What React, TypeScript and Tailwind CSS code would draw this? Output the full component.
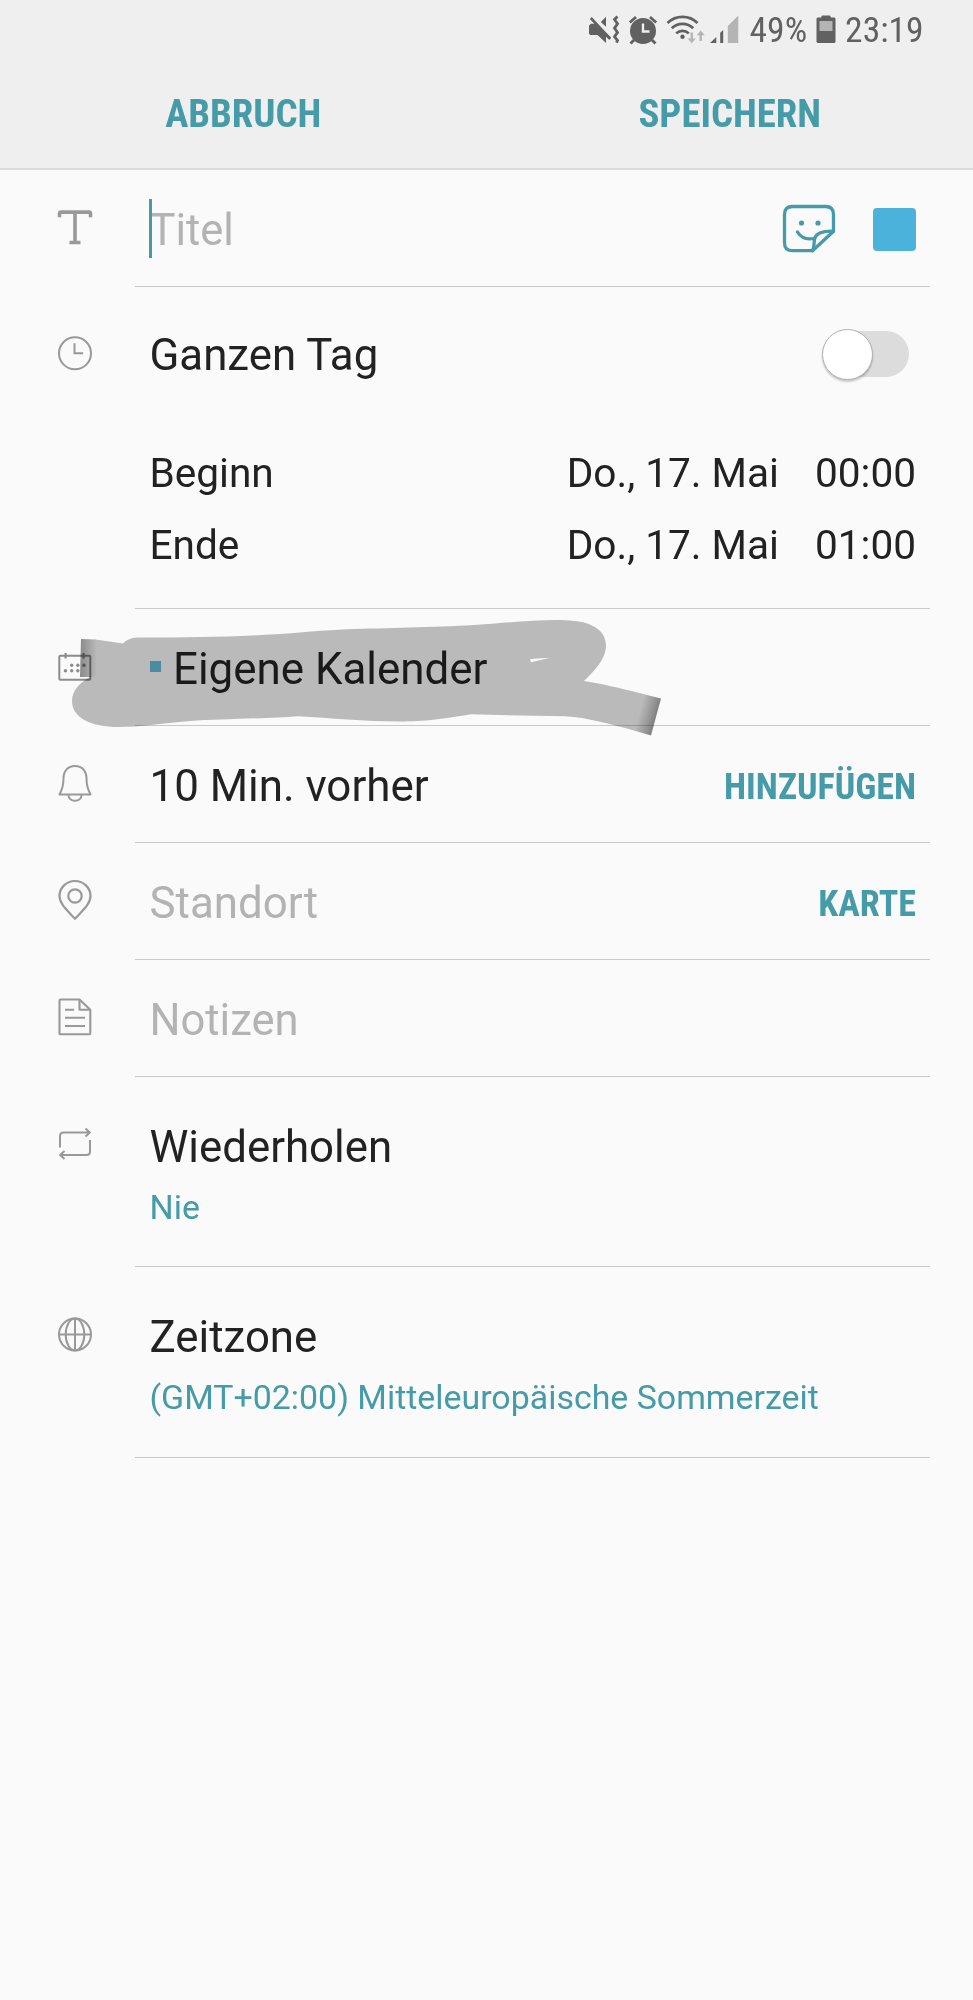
import { useState } from 'react';
import type { ReactNode } from 'react';

function MuteIcon() {
  return (
    <svg width="32" height="30" viewBox="0 0 32 30" fill="#616161">
      <path d="M1 10.5 3 8.8h5.5L23 22.6v.6l-1.6 1.6-3.4-3.2V28L9.5 20H2.2L1 18.8z" />
      <path d="M12.8 7 18 1.8v10z" />
      <path d="M2.8 3 21.8 23.5" stroke="#616161" strokeWidth="2.6" />
      <path
        d="M29.5 1.5 26.5 4.5l3 4.3-3 4.3 3 4.3-3 4.3 3 3.8-1 2.2"
        fill="none"
        stroke="#616161"
        strokeWidth="2.8"
      />
    </svg>
  );
}

function AlarmIcon() {
  return (
    <svg width="30" height="30" viewBox="0 0 30 30">
      <circle cx="15" cy="16" r="13" fill="#616161" />
      <path d="M1.8 7.5 8 2M28.2 7.5 22 2M6 25l-3.5 3.6M24 25l3.5 3.6" stroke="#616161" strokeWidth="2.8" />
      <path d="M15 8.5v8h6.5" fill="none" stroke="#efefef" strokeWidth="2.4" />
    </svg>
  );
}

function WifiIcon() {
  return (
    <svg width="40" height="30" viewBox="0 0 40 30" fill="none" stroke="#616161" strokeWidth="2.7">
      <path d="M1.5 8a21.5 21.5 0 0 1 30 0" />
      <path d="M5.8 13.3a15 15 0 0 1 21.4 0" />
      <path d="M10.2 18.4a9 9 0 0 1 12.6 0" />
      <circle cx="16.5" cy="21.8" r="2.2" fill="#616161" stroke="none" />
      <path d="M25.7 17.5v8M34.7 26v-8" stroke="#b4b4b4" strokeWidth="2.4" />
      <path d="M21.7 23.5h8l-4 4.8zM30.7 20.3h8l-4-4.8z" fill="#b4b4b4" stroke="none" />
    </svg>
  );
}

function SignalIcon() {
  return (
    <svg width="29" height="30" viewBox="0 0 29 30" fill="#616161">
      <path d="M0 28 6.3 22v6zM10.2 17.8l3-2.8v13h-3z" />
      <path d="M17.8 11 28.3.5V28H17.8z" fill="#b4b4b4" />
    </svg>
  );
}

function BatteryIcon() {
  return (
    <svg width="20" height="30" viewBox="0 0 20 30">
      <path d="M6 .5h8l1 2h3.5l1 1V27l-1 1H1.5l-1-1V3.5l1-1H5z" fill="#616161" />
      <path d="M3.5 6h13v10h-13z" fill="#b4b4b4" />
    </svg>
  );
}

// Left hand column icons, all drawn on the same 36x44 box
function RowIcon({ children }: { children: ReactNode }) {
  return (
    <svg
      width="36"
      height="44"
      viewBox="0 0 36 44"
      fill="none"
      stroke="#999999"
      strokeWidth="2"
      strokeLinejoin="round"
    >
      {children}
    </svg>
  );
}

const icons = {
  title: (
    <RowIcon>
      <path
        d="M2.5 11.3V7.7q0-1.6 1.6-1.6h27.8q1.6 0 1.6 1.6v3.6M18 6.1v30M12.5 36.5h11"
        strokeWidth="3.6"
        strokeLinejoin="miter"
      />
    </RowIcon>
  ),
  clock: (
    <RowIcon>
      <circle cx="18" cy="21.3" r="16" />
      <path d="M17.5 11.3v10h8.7" strokeLinejoin="miter" />
    </RowIcon>
  ),
  calendar: (
    <RowIcon>
      <rect x="2.3" y="10.8" width="31" height="24" rx="1" stroke="#8c8c8c" />
      <path d="M8.6 8v5.6M26.6 8v5.6" stroke="#8c8c8c" strokeWidth="2.2" />
      <g fill="#8c8c8c" stroke="none">
        <circle cx="14.7" cy="20.3" r="1.7" />
        <circle cx="20.8" cy="20.3" r="1.7" />
        <circle cx="27" cy="20.3" r="1.7" />
        <circle cx="8.4" cy="25.8" r="1.7" />
        <circle cx="14.7" cy="25.8" r="1.7" />
        <circle cx="20.8" cy="25.8" r="1.7" />
      </g>
    </RowIcon>
  ),
  bell: (
    <RowIcon>
      <path d="M2.5 32.4C5.5 27 6.5 23 6.5 16.5 6.5 9 11 4 18 4s11.5 5 11.5 12.5c0 6.5 1 10.5 4 15.9z" />
      <path d="M11.5 33c0 3.7 3 5.7 6.5 5.7s6.5-2 6.5-5.7" />
    </RowIcon>
  ),
  pin: (
    <RowIcon>
      <path
        d="M18 39.8C11.5 32.5 2.5 25.5 2.5 17a15.5 15 0 0 1 31 0c0 8.5-9 15.5-15.5 22.8z"
        strokeWidth="2.2"
      />
      <circle cx="18" cy="17" r="6.7" strokeWidth="2.2" />
    </RowIcon>
  ),
  note: (
    <RowIcon>
      <path d="M3.5 3.5h19l10.8 10.2v23.5q0 1-1 1H3.5q-1 0-1-1V4.5q0-1 1-1z" strokeWidth="2.1" />
      <path d="M22.5 3.5v10.2h10.5M8 13.7h9M8 21.7h20M8 30h20" strokeWidth="2.1" />
    </RowIcon>
  ),
  repeat: (
    <RowIcon>
      <path
        d="M3 25.5V14q0-3.5 3.5-3.5h26M28.5 6.5l4.3 4-4.3 4M33 18v11.5q0 3.5-3.5 3.5h-26M7.5 29l-4.3 4 4.3 4"
        strokeLinejoin="miter"
      />
    </RowIcon>
  ),
  globe: (
    <RowIcon>
      <circle cx="18" cy="22.5" r="16" />
      <ellipse cx="18" cy="22.5" rx="9.3" ry="16" />
      <path d="M18 6.5v32M2 22.5h32" />
    </RowIcon>
  ),
};

function StickerIcon() {
  return (
    <svg
      width="54"
      height="50"
      viewBox="0 0 54 50"
      fill="none"
      stroke="#459ba7"
      strokeWidth="3.3"
      strokeLinejoin="round"
      strokeLinecap="round"
    >
      <path d="M30.5 46.7H10.5q-8 0-8-8V10.5q0-8 8-8h33q8 0 8 8v16.7z" />
      <path d="M30.5 46.7c2.5-5 1-8.5 2.3-12.5 1.8-5.8 9-7.2 18.7-7" />
      <path d="M15.5 28c3 5 8.5 8 16.5 6.5" />
      <g fill="#459ba7" stroke="none">
        <circle cx="19.5" cy="19" r="2.6" />
        <circle cx="36" cy="19" r="2.6" />
      </g>
    </svg>
  );
}

function MarkerStroke() {
  return (
    <svg
      className="pointer-events-none absolute left-0 top-0 z-10 overflow-visible mix-blend-multiply"
      width="973"
      height="130"
      viewBox="0 609 973 130"
    >
      <defs>
        <linearGradient id="markerStart" gradientUnits="userSpaceOnUse" x1="80" y1="0" x2="97" y2="0">
          <stop offset="0" stopColor="#8c8c8c" />
          <stop offset="1" stopColor="#bebebe" />
        </linearGradient>
        <linearGradient id="markerEnd" gradientUnits="userSpaceOnUse" x1="640" y1="711" x2="656" y2="715.5">
          <stop offset="0" stopColor="#bebebe" />
          <stop offset="1" stopColor="#858585" />
        </linearGradient>
      </defs>
      <path
        fill="#bebebe"
        fillRule="evenodd"
        d="M95 639.5C105 640.5 114 642.5 123 643.5C128 638.5 133 637.5 140 637.5C200 637.5 240 637 300 632.5C330 630 350 629 370 628.6C410 627.5 460 626.5 495 623.5C520 621.5 545 619.5 565 620.2C592 621 606 630 606 646C606 659 594 671 584 681C600 683.5 620 688 642 693.7L634 730.5C610 724 588 717.5 565 716.2C530 715.6 500 715.3 471 714.3C440 719.5 425 721.5 400 721.5C365 721.5 330 718 298 716.3C270 718.5 220 719 190 721C160 723.5 140 727 118 727C92 727 72 718 72 701C72 691 79 683 90 677L95 677ZM530 659L550 657.7L531 662.2Z"
      />
      <path d="M81 639L96 639.6V677H80Z" fill="url(#markerStart)" />
      <path d="M641 693.5L661 698.5L651 735.5L633 730.2Z" fill="url(#markerEnd)" />
    </svg>
  );
}

interface RowProps {
  icon: ReactNode;
  children: ReactNode;
  overlay?: ReactNode;
}

function Row({ icon, children, overlay }: RowProps) {
  return (
    <div className="relative flex h-[117px]">
      <div className="w-[135px] pl-[57px] pt-9">{icon}</div>
      <div className="mr-[43px] flex flex-1 items-center justify-between border-b border-[#c8c8c8] pl-[14.5px] pr-[14px] pt-1.5">
        {children}
      </div>
      {overlay}
    </div>
  );
}

function DetailRow({ icon, label, value }: { icon: ReactNode; label: string; value: string }) {
  return (
    <div className="flex h-[190.5px]">
      <div className="w-[135px] pl-[57px] pt-[45px]">{icon}</div>
      <div className="mr-[43px] flex-1 border-b border-[#c8c8c8] pl-[14.5px] pt-[44px]">
        <div className="text-[43.8px] leading-[52px]">{label}</div>
        <div className="mt-[13px] text-[33.9px] leading-[44px] text-[#459ba7]">{value}</div>
      </div>
    </div>
  );
}

function TimeRow({ label, date, time }: { label: string; date: string; time: string }) {
  return (
    <div className="flex h-[72px] items-center text-[40.6px]">
      <span className="flex-1">{label}</span>
      <span>{date}</span>
      <span className="ml-[36px]">{time}</span>
    </div>
  );
}

export default function App() {
  const [allDay, setAllDay] = useState(false);

  return (
    <div className="h-[2000px] w-[973px] overflow-hidden bg-[#fafafa] font-['Roboto',sans-serif] text-[#222222]">
      <header className="h-[169.5px] border-b-2 border-[#dcdcdc] bg-[#efefef]">
        <div className="flex h-[60px] items-center justify-end pr-[49.5px] font-['Roboto_Condensed','Roboto',sans-serif] text-[35.5px] text-[#616161]">
          <MuteIcon />
          <span className="ml-2"><AlarmIcon /></span>
          <span className="ml-2"><WifiIcon /></span>
          <span className="ml-1"><SignalIcon /></span>
          <span className="ml-[11px] pt-0.5">49%</span>
          <span className="ml-[9px]"><BatteryIcon /></span>
          <span className="ml-[9px] pt-0.5">23:19</span>
        </div>
        <div className="flex h-[107px] items-center pt-0.5 font-['Roboto_Condensed','Roboto',sans-serif] text-[38.8px] font-bold text-[#459ba7]">
          <button className="w-1/2 text-center">ABBRUCH</button>
          <button className="w-1/2 text-center">SPEICHERN</button>
        </div>
      </header>

      <Row icon={icons.title}>
        <div className="relative flex items-center">
          <span className="absolute -left-[1px] top-0 h-[59px] w-[3.5px] bg-[#459ba7]" />
          <span className="pt-px text-[43.5px] leading-[62px] text-[#b3b3b3]">Titel</span>
        </div>
        <div className="flex items-center gap-[37px] pb-[3px]">
          <StickerIcon />
          <span className="size-[43px] rounded bg-[#4bb2dc]" />
        </div>
      </Row>

      <div className="flex h-[322px]">
        <div className="w-[135px] pl-[57px] pt-[45px]">{icons.clock}</div>
        <div className="mr-[43px] flex-1 border-b border-[#c8c8c8] pl-[14.5px] pr-[14px] pt-[43px]">
          <div className="flex h-[52px] items-center justify-between">
            <span className="text-[43.8px]">Ganzen Tag</span>
            <button
              className="mb-[3px] mr-[7px] flex h-[46px] w-[84px] items-center rounded-full bg-[#dcdcdc]"
              onClick={() => setAllDay(!allDay)}
            >
              <span
                className={
                  allDay
                    ? 'ml-auto size-[51px] shrink-0 rounded-full border border-[#b0b0b0] bg-white'
                    : '-ml-[3px] size-[51px] shrink-0 rounded-full border border-[#b0b0b0] bg-white shadow-[0_2px_2px_rgba(0,0,0,0.2)]'
                }
              />
            </button>
          </div>
          <div className="mt-[56px]">
            <TimeRow label="Beginn" date="Do., 17. Mai" time="00:00" />
            <TimeRow label="Ende" date="Do., 17. Mai" time="01:00" />
          </div>
        </div>
      </div>

      <Row icon={icons.calendar} overlay={<MarkerStroke />}>
        <div className="flex items-center">
          <span className="mb-[6px] ml-[0.5px] size-[11px] bg-[#63bcda]" />
          <span className="ml-[12px] text-[43.9px]">Eigene Kalender</span>
        </div>
      </Row>
      <Row icon={icons.bell}>
        <span className="text-[43.9px]">10 Min. vorher</span>
        <button className="font-['Roboto_Condensed','Roboto',sans-serif] text-[36px] font-bold text-[#459ba7]">
          HINZUFÜGEN
        </button>
      </Row>
      <Row icon={icons.pin}>
        <span className="text-[43.9px] text-[#b3b3b3]">Standort</span>
        <button className="font-['Roboto_Condensed','Roboto',sans-serif] text-[36px] font-bold text-[#459ba7]">
          KARTE
        </button>
      </Row>
      <Row icon={icons.note}>
        <span className="text-[43.5px] text-[#b3b3b3]">Notizen</span>
      </Row>
      <DetailRow icon={icons.repeat} label="Wiederholen" value="Nie" />
      <DetailRow icon={icons.globe} label="Zeitzone" value="(GMT+02:00) Mitteleuropäische Sommerzeit" />
    </div>
  );
}
